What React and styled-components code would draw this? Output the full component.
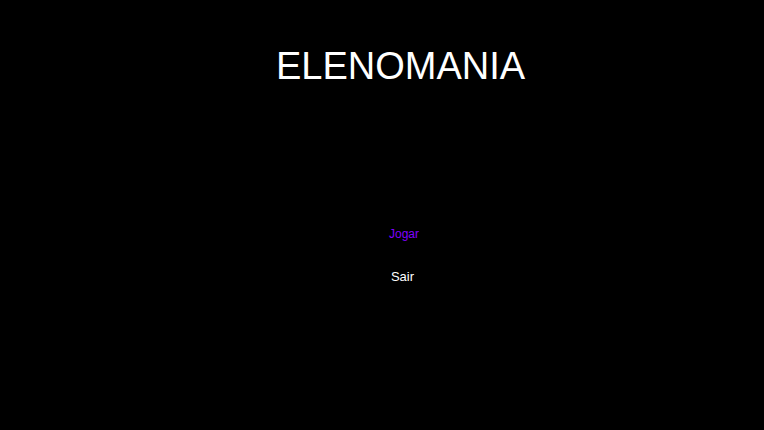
import styled, { createGlobalStyle } from "styled-components";

const GlobalStyle = createGlobalStyle`
  html, body {
    margin: 0;
    background: #000;
    font-family: "Liberation Sans", Arial, sans-serif;
  }
`;

const Screen = styled.div`
  width: 100%;
  height: 430px;
  padding-left: 37px;
  box-sizing: border-box;
  display: flex;
  flex-direction: column;
  align-items: center;
`;

const Title = styled.h1`
  margin: 44px 0 0;
  font-size: 38px;
  font-weight: normal;
  line-height: 44px;
  color: #fff;
`;

const Menu = styled.div`
  margin-top: 137px;
  padding-left: 4px;
  display: flex;
  flex-direction: column;
  align-items: center;
  gap: 27px;
`;

const MenuItem = styled.div`
  font-size: ${(p) => (p.$active ? "12px" : "13px")};
  line-height: 15px;
  color: ${(p) => (p.$active ? "#8000ff" : "#fff")};
  padding: ${(p) => (p.$active ? "2px 0 0 3px" : "0")};
  cursor: pointer;
`;

export default function App() {
  return (
    <>
      <GlobalStyle />
      <Screen>
        <Title>ELENOMANIA</Title>
        <Menu>
          <MenuItem $active>Jogar</MenuItem>
          <MenuItem>Sair</MenuItem>
        </Menu>
      </Screen>
    </>
  );
}
